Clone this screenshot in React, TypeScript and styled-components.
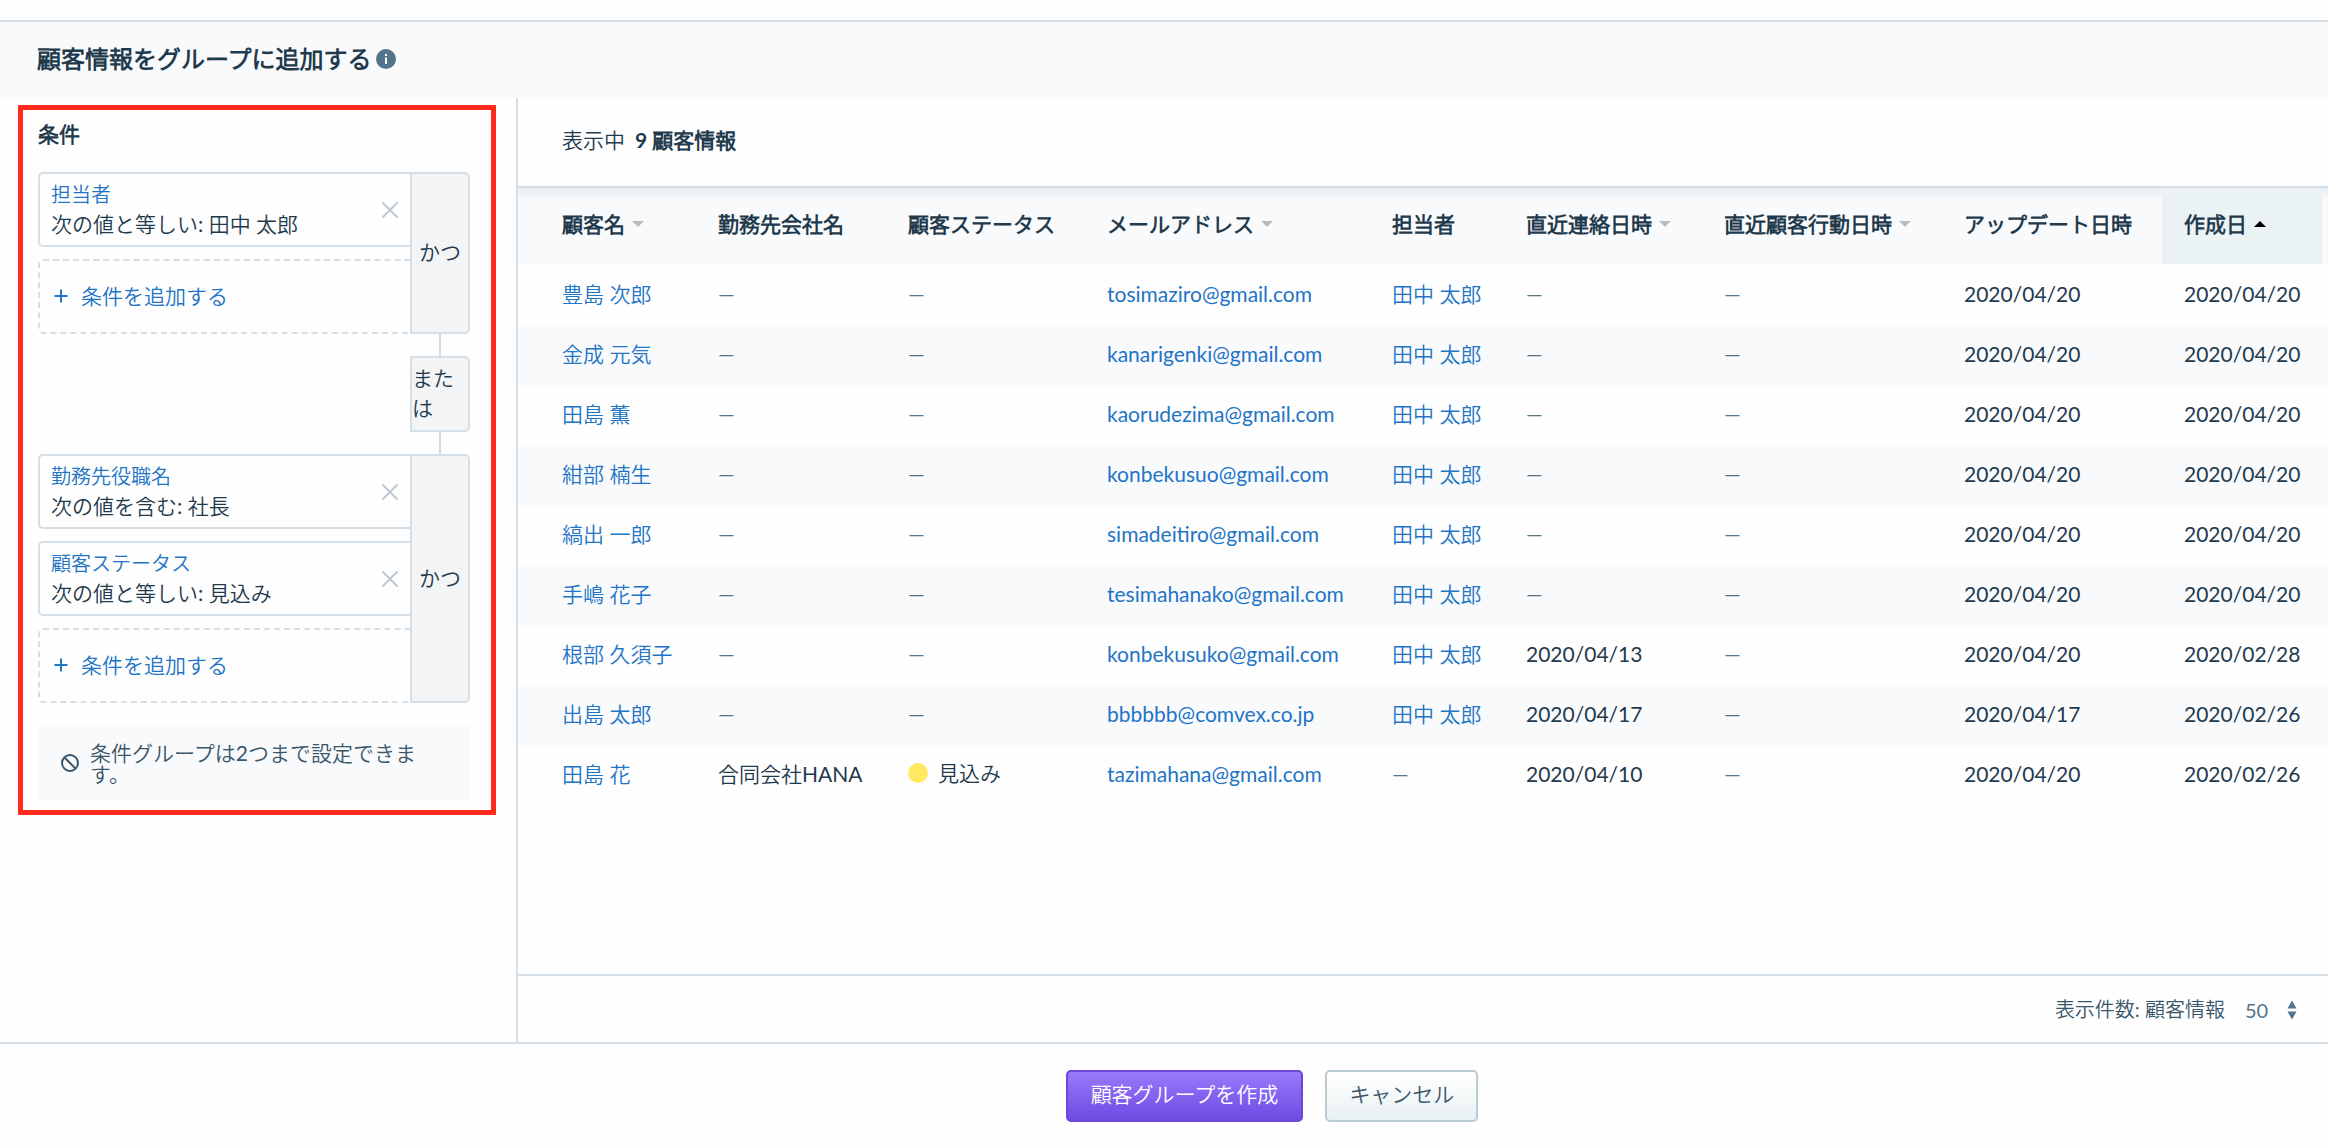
import React from "react";
import styled, { createGlobalStyle, css } from "styled-components";

const ink = "#1f3a4d";
const link = "#2274c6";
const line = "#d4dfe7";
const tint = "#f9fafc";

const GlobalStyle = createGlobalStyle`
  *, *::before, *::after { box-sizing: border-box; }
  html, body, #root { height: 100%; }
  body {
    margin: 0;
    background: #fefefe;
    color: ${ink};
    font-family: Lato, "Noto Sans CJK JP DemiLight", "Noto Sans CJK JP", sans-serif;
    font-size: 21px;
    line-height: 30px;
  }
  h1, h2, p { margin: 0; }
  button, select { font: inherit; color: inherit; }
  a { color: ${link}; text-decoration: none; }
`;

const Page = styled.div`
  display: flex;
  flex-direction: column;
  min-height: 100vh;
  padding-top: 20px;
`;

const TitleBar = styled.header`
  display: flex;
  align-items: center;
  gap: 4px;
  height: 78px;
  padding: 0 37px 2px;
  border-top: 2px solid ${line};
  background: ${tint};
`;

const Title = styled.h1`
  font-size: 24px;
  font-weight: 700;
  line-height: 36px;
`;

const Body = styled.div`
  display: flex;
  flex: 1;
  min-height: 0;
`;

const Sidebar = styled.aside`
  flex: none;
  width: 518px;
  padding: 7px 20px 0 18px;
  border-right: 2px solid ${line};
`;

const Highlight = styled.section`
  display: flex;
  flex-direction: column;
  width: 478px;
  padding: 9px 21px 10px 15px;
  border: 5px solid #ff2a1c;
`;

const SidebarTitle = styled.h2`
  margin-bottom: 23px;
  font-size: 21px;
  font-weight: 700;
  line-height: 30px;
`;

const Group = styled.div`
  display: flex;
`;

const Conditions = styled.div`
  display: flex;
  flex: 1;
  flex-direction: column;
  gap: 12px;
`;

const box = css`
  display: flex;
  align-items: center;
  height: 75px;
  border: 2px solid ${line};
  border-right: 0;
  border-radius: 5px 0 0 5px;
`;

const Card = styled.div`
  ${box}
  justify-content: space-between;
  padding: 0 9px 0 11px;
`;

const CardText = styled.div`
  padding-bottom: 2px;
`;

const Field = styled.a`
  display: block;
  font-size: 20px;
`;

const IconButton = styled.button`
  display: flex;
  padding: 2px;
  border: 0;
  background: none;
`;

const AddButton = styled.button`
  ${box}
  gap: 13px;
  padding: 0 14px 2px;
  border-style: dashed;
  background: none;
  color: ${link};
`;

const Operator = styled.div<{ $alone?: boolean }>`
  display: flex;
  align-items: center;
  justify-content: ${(p) => (p.$alone ? "flex-start" : "center")};
  width: 60px;
  height: ${(p) => (p.$alone ? "76px" : "auto")};
  padding-bottom: 2px;
  border: 2px solid ${line};
  border-radius: 0 5px 5px 0;
  background: #f2f4f6;
`;

const Joint = styled.div`
  display: flex;
  flex-direction: column;
  align-items: center;
  align-self: flex-end;
  width: 60px;
`;

const Stem = styled.span`
  width: 2px;
  height: 22px;
  background: ${line};
`;

const Notice = styled.p`
  display: flex;
  align-items: center;
  gap: 10px;
  height: 74px;
  margin-top: 23px;
  padding: 0 22px;
  background: ${tint};
  color: #3a566b;
  line-height: 21px;
`;

const NoticeText = styled.span`
  flex: 1;
`;

const Main = styled.main`
  display: flex;
  flex: 1;
  flex-direction: column;
  min-width: 0;
`;

const Summary = styled.div`
  display: flex;
  align-items: center;
  gap: 10px;
  height: 90px;
  padding: 0 44px 4px;
  border-bottom: 2px solid ${line};
`;

const TableArea = styled.div`
  flex: 1;
  overflow: hidden;
`;

const Table = styled.table`
  width: 100%;
  border-spacing: 0;
  table-layout: fixed;
`;

const HeadCell = styled.th<{ $width?: number; $sorted?: boolean }>`
  width: ${(p) => (p.$width ? `${p.$width}px` : "auto")};
  height: 78px;
  padding: 0 0 4px 22px;
  border-bottom: 2px solid #fefefe;
  background: ${(p) => (p.$sorted ? "#eaf2f4" : `linear-gradient(#e6edf2, ${tint} 12px)`)};
  text-align: left;
  white-space: nowrap;
  &:first-child { padding-left: 44px; }
  &:last-child { padding: 0; }
`;

const HeadLabel = styled.span`
  display: inline-flex;
  align-items: center;
  gap: 7px;
`;

const Row = styled.tr`
  &:nth-child(even) { background: ${tint}; }
`;

const Cell = styled.td`
  height: 60px;
  padding: 0 0 4px 22px;
  white-space: nowrap;
  &:first-child { padding-left: 44px; }
  &:last-child { padding: 0; }
`;

const Empty = styled.span`
  color: #54748b;
`;

const Status = styled.span`
  display: inline-flex;
  align-items: center;
  gap: 10px;
  &::before {
    width: 20px;
    height: 20px;
    border-radius: 50%;
    background: #ffe95f;
    content: "";
  }
`;

const Pager = styled.div`
  display: flex;
  align-items: center;
  justify-content: flex-end;
  gap: 20px;
  height: 68px;
  padding: 0 31px 0 0;
  border-top: 2px solid ${line};
  color: #3a566b;
  font-size: 20px;
`;

const SizePicker = styled.span`
  display: flex;
  align-items: center;
  gap: 18px;
  padding-top: 2px;
  color: #54748b;
`;

const Select = styled.select`
  padding: 0;
  border: 0;
  background: none;
  appearance: none;
`;

const Footer = styled.footer`
  display: flex;
  align-items: flex-start;
  justify-content: center;
  gap: 22px;
  height: 106px;
  padding: 26px 0 0 216px;
  border-top: 2px solid ${line};
`;

const Button = styled.button<{ $primary?: boolean }>`
  height: 52px;
  padding: ${(p) => (p.$primary ? "0 23px 4px" : "0 22px 4px")};
  border: 2px solid ${(p) => (p.$primary ? "#6b48d8" : "#bccad4")};
  border-radius: 5px;
  background: ${(p) =>
    p.$primary ? "linear-gradient(#977afb, #6f4ae2)" : "linear-gradient(#ffffff, #e9f1f3)"};
  color: ${(p) => (p.$primary ? "#ffffff" : "#3a566b")};
`;

const InfoIcon = () => (
  <svg width="20" height="20" viewBox="0 0 20 20" aria-hidden="true">
    <circle cx="10" cy="10" r="10" fill="#54748b" />
    <path d="M9 5h2v2H9zM9 8.5h2V15H9z" fill="#fff" />
  </svg>
);

const CloseIcon = () => (
  <svg width="18" height="18" viewBox="0 0 18 18" aria-hidden="true">
    <path d="M2 2l14 14M16 2L2 16" stroke="#bccad6" strokeWidth="2" strokeLinecap="round" />
  </svg>
);

const PlusIcon = () => (
  <svg width="14" height="14" viewBox="0 0 14 14" aria-hidden="true">
    <path d="M7 .5v13M.5 7h13" stroke="#2274c6" strokeWidth="2" />
  </svg>
);

const BanIcon = () => (
  <svg width="20" height="20" viewBox="0 0 20 20" aria-hidden="true">
    <circle cx="10" cy="10" r="8" fill="none" stroke="#3a566b" strokeWidth="2" />
    <path d="M4.5 4.5l11 11" stroke="#3a566b" strokeWidth="2" />
  </svg>
);

const SortIcon = ({ up }: { up?: boolean }) => (
  <svg width="12" height="6" viewBox="0 0 12 6" aria-hidden="true">
    <path d={up ? "M0 6h12L6 0z" : "M0 0h12L6 6z"} fill={up ? "#000" : "#b9bbbd"} />
  </svg>
);

const StepIcon = () => (
  <svg width="10" height="20" viewBox="0 0 10 20" aria-hidden="true">
    <path d="M5 0.5l4.5 8h-9zM5 19.5l4.5-8h-9z" fill="#54748b" />
  </svg>
);

type Condition = { field: string; value: string };

const ConditionGroup = ({ items }: { items: Condition[] }) => (
  <Group>
    <Conditions>
      {items.map((c) => (
        <Card key={c.field}>
          <CardText>
            <Field href="#">{c.field}</Field>
            {c.value}
          </CardText>
          <IconButton type="button" aria-label="削除">
            <CloseIcon />
          </IconButton>
        </Card>
      ))}
      <AddButton type="button">
        <PlusIcon />
        条件を追加する
      </AddButton>
    </Conditions>
    <Operator>かつ</Operator>
  </Group>
);

const columns: { label: string; width: number; sort?: "down" | "up" }[] = [
  { label: "顧客名", width: 178, sort: "down" },
  { label: "勤務先会社名", width: 190 },
  { label: "顧客ステータス", width: 199 },
  { label: "メールアドレス", width: 285, sort: "down" },
  { label: "担当者", width: 134 },
  { label: "直近連絡日時", width: 198, sort: "down" },
  { label: "直近顧客行動日時", width: 240, sort: "down" },
  { label: "アップデート日時", width: 220 },
  { label: "作成日", width: 160, sort: "up" },
];

type Contact = {
  name: string;
  email: string;
  company?: string;
  status?: string;
  owner?: string;
  contacted?: string;
  updated: string;
  created: string;
};

const owner = "田中 太郎";
const contacts: Contact[] = [
  { name: "豊島 次郎", email: "tosimaziro@gmail.com", owner, updated: "2020/04/20", created: "2020/04/20" },
  { name: "金成 元気", email: "kanarigenki@gmail.com", owner, updated: "2020/04/20", created: "2020/04/20" },
  { name: "田島 薫", email: "kaorudezima@gmail.com", owner, updated: "2020/04/20", created: "2020/04/20" },
  { name: "紺部 楠生", email: "konbekusuo@gmail.com", owner, updated: "2020/04/20", created: "2020/04/20" },
  { name: "縞出 一郎", email: "simadeitiro@gmail.com", owner, updated: "2020/04/20", created: "2020/04/20" },
  { name: "手嶋 花子", email: "tesimahanako@gmail.com", owner, updated: "2020/04/20", created: "2020/04/20" },
  { name: "根部 久須子", email: "konbekusuko@gmail.com", owner, contacted: "2020/04/13", updated: "2020/04/20", created: "2020/02/28" },
  { name: "出島 太郎", email: "bbbbbb@comvex.co.jp", owner, contacted: "2020/04/17", updated: "2020/04/17", created: "2020/02/26" },
  { name: "田島 花", email: "tazimahana@gmail.com", company: "合同会社HANA", status: "見込み", contacted: "2020/04/10", updated: "2020/04/20", created: "2020/02/26" },
];

const none = <Empty>—</Empty>;

export default function App() {
  return (
    <Page>
      <GlobalStyle />
      <TitleBar>
        <Title>顧客情報をグループに追加する</Title>
        <InfoIcon />
      </TitleBar>
      <Body>
        <Sidebar>
          <Highlight>
            <SidebarTitle>条件</SidebarTitle>
            <ConditionGroup items={[{ field: "担当者", value: "次の値と等しい: 田中 太郎" }]} />
            <Joint>
              <Stem />
              <Operator $alone>または</Operator>
              <Stem />
            </Joint>
            <ConditionGroup
              items={[
                { field: "勤務先役職名", value: "次の値を含む: 社長" },
                { field: "顧客ステータス", value: "次の値と等しい: 見込み" },
              ]}
            />
            <Notice>
              <BanIcon />
              <NoticeText>条件グループは2つまで設定できます。</NoticeText>
            </Notice>
          </Highlight>
        </Sidebar>
        <Main>
          <Summary>
            表示中 <strong>9 顧客情報</strong>
          </Summary>
          <TableArea>
            <Table>
              <thead>
                <tr>
                  {columns.map((c) => (
                    <HeadCell key={c.label} scope="col" $width={c.width} $sorted={c.sort === "up"}>
                      <HeadLabel>
                        {c.label}
                        {c.sort && <SortIcon up={c.sort === "up"} />}
                      </HeadLabel>
                    </HeadCell>
                  ))}
                  <HeadCell as="td" />
                </tr>
              </thead>
              <tbody>
                {contacts.map((c) => (
                  <Row key={c.email}>
                    <Cell><a href="#">{c.name}</a></Cell>
                    <Cell>{c.company ?? none}</Cell>
                    <Cell>{c.status ? <Status>{c.status}</Status> : none}</Cell>
                    <Cell><a href="#">{c.email}</a></Cell>
                    <Cell>{c.owner ? <a href="#">{c.owner}</a> : none}</Cell>
                    <Cell>{c.contacted ?? none}</Cell>
                    <Cell>{none}</Cell>
                    <Cell>{c.updated}</Cell>
                    <Cell>{c.created}</Cell>
                    <Cell />
                  </Row>
                ))}
              </tbody>
            </Table>
          </TableArea>
          <Pager>
            <label htmlFor="page-size">表示件数: 顧客情報</label>
            <SizePicker>
              <Select id="page-size" defaultValue="50">
                <option>50</option>
              </Select>
              <StepIcon />
            </SizePicker>
          </Pager>
        </Main>
      </Body>
      <Footer>
        <Button type="button" $primary>顧客グループを作成</Button>
        <Button type="button">キャンセル</Button>
      </Footer>
    </Page>
  );
}
